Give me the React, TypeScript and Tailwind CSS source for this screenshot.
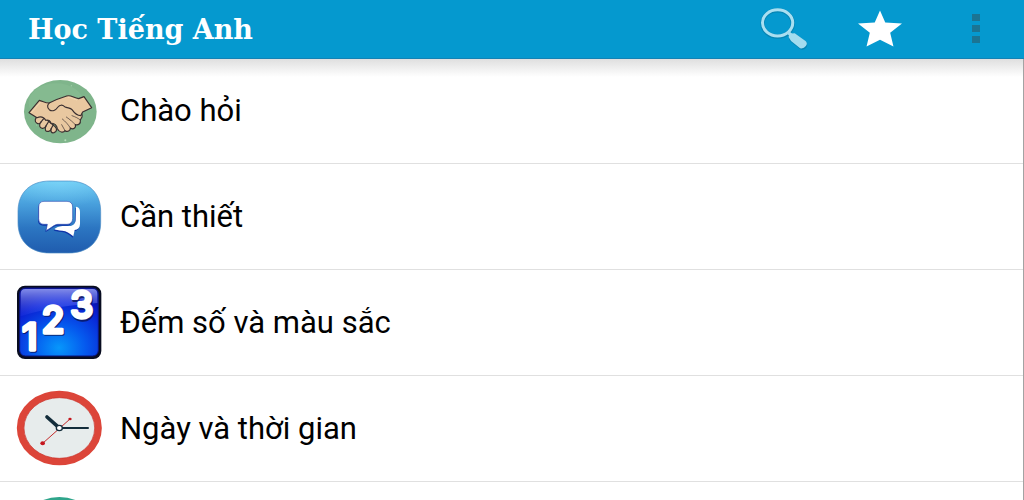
import type { ReactNode } from 'react'

type Topic = { id: string; label?: string; icon: ReactNode }

const iconCls = 'h-[74px] w-[84px] shrink-0 overflow-visible'

function HandshakeIcon(){
  return (
    <svg viewBox="21 12 252 222" className={iconCls} aria-hidden="true">
      <ellipse cx="151" cy="125" rx="109" ry="95" fill="#7fb58b" />
      <ellipse cx="138" cy="98" rx="82" ry="58" fill="#8bbf95" opacity=".5" />
      <g stroke="#3a2f30" strokeWidth="3.5" strokeLinejoin="round" strokeLinecap="round" fill="#e9c8a0">
        <path d="M84 140 C74 143 73 156 81 160 C86 163 91 160 93 156 C86 165 88 174 97 175 C103 176 106 172 108 168 C103 178 106 186 116 184 C121 183 123 179 124 176 C121 184 124 190 132 188 C141 185 142 177 135 170 L104 144 C98 138 90 138 84 140Z" />
        <path d="M92 157 L101 146 M107 169 L117 153 M123 177 L130 164" fill="none" />
        <path d="M88 91 L57 128 L81 143 C93 138 102 142 107 151 C115 148 121 153 123 160 C133 158 141 167 142 176 C148 187 160 190 165 182 C172 187 182 183 181 174 C190 180 199 173 196 164 C205 167 213 160 211 150 L216 141 C218 132 212 127 206 125 L168 104 C150 92 132 97 117 99 C106 99 97 93 88 91Z" />
        <path d="M119 98 C133 91 151 84 170 78 C183 74 191 84 206 86 L222 80 L245 113 L218 126 L212 137 C201 137 193 129 186 119 C181 112 173 115 164 110 C156 103 149 105 144 111 C137 121 127 126 118 119 C110 112 112 103 119 98Z" />
        <path d="M155 164 L165 182 M157 147 C166 154 176 165 181 174 M169 141 C181 149 190 158 196 164 M186 137 C197 141 205 145 211 150" fill="none" strokeWidth="2" />
      </g>
      <path d="M92 96 L64 128 M173 82 C181 80 187 87 201 90" fill="none" stroke="#f8dfbb" strokeWidth="2" />
      <circle cx="166" cy="211" r="3" fill="#b7dfba" />
      <circle cx="184" cy="47" r="1.5" fill="#b7dfba" />
      <circle cx="80" cy="165" r="2" fill="#99cca1" />
    </svg>
  )
}

function ChatIcon(){
  return (
    <svg viewBox="21 24 252 222" className={iconCls} aria-hidden="true">
      <defs>
        <linearGradient id="chatBg" x1="0" y1="0" x2="0" y2="1">
          <stop offset="0" stopColor="#6cc9f2" />
          <stop offset=".3" stopColor="#4aa2de" />
          <stop offset=".65" stopColor="#2c76c2" />
          <stop offset="1" stopColor="#1f5cae" />
        </linearGradient>
        <radialGradient id="chatGlow" cx=".5" cy="0" r=".65">
          <stop offset="0" stopColor="#8be1ff" stopOpacity=".4" />
          <stop offset="1" stopColor="#8be1ff" stopOpacity="0" />
        </radialGradient>
      </defs>
      <path d="M120 27 H176 C235 27 272 62 272 118 V152 C272 208 235 243 176 243 H120 C61 243 24 208 24 152 V118 C24 62 61 27 120 27Z" fill="url(#chatBg)" stroke="#4c8cc4" strokeWidth="2" />
      <path d="M120 29 H176 C235 29 270 62 270 118 V152 H26 V118 C26 62 61 29 120 29Z" fill="url(#chatGlow)" />
      <g transform="translate(-2 4)" fill="#0f35a8">
        <path d="M198 104 C208 106 210 112 210 120 V156 C210 167 204 173 194 174 L190 193 C179 184 169 177 157 176 C145 175 137 174 133 171 C139 167 146 163 157 162 H181 C190 160 197 153 197 143Z" />
        <path d="M102 88 H171 C182 88 188 95 188 105 V139 C188 151 181 157 171 157 H143 C132 158 122 169 108 176 L112 157 H102 C92 157 86 151 86 140 V105 C86 94 92 88 102 88Z" />
      </g>
      <g fill="#fff">
        <path d="M198 104 C208 106 210 112 210 120 V156 C210 167 204 173 194 174 L190 193 C179 184 169 177 157 176 C145 175 137 174 133 171 C139 167 146 163 157 162 H181 C190 160 197 153 197 143Z" />
        <path d="M102 88 H171 C182 88 188 95 188 105 V139 C188 151 181 157 171 157 H143 C132 158 122 169 108 176 L112 157 H102 C92 157 86 151 86 140 V105 C86 94 92 88 102 88Z" stroke="#2a4fb4" strokeWidth="2" />
      </g>
    </svg>
  )
}

function NumbersIcon(){
  return (
    <svg viewBox="21 24 252 222" className={iconCls} aria-hidden="true">
      <defs>
        <radialGradient id="numBg" cx=".5" cy=".88" r=".85">
          <stop offset="0" stopColor="#0797fb" />
          <stop offset=".4" stopColor="#0559ee" />
          <stop offset=".8" stopColor="#0a20d2" />
          <stop offset="1" stopColor="#0a10a8" />
        </radialGradient>
        <linearGradient id="numShine" x1="0" y1="0" x2="0" y2="1">
          <stop offset="0" stopColor="#a9b4ff" stopOpacity=".75" />
          <stop offset="1" stopColor="#4a60ff" stopOpacity=".1" />
        </linearGradient>
      </defs>
      <rect x="21" y="23" width="253" height="220" rx="24" fill="#080c20" />
      <rect x="29" y="30" width="236" height="204" rx="17" fill="url(#numBg)" stroke="#0b1680" strokeWidth="3" />
      <path d="M46 33 H248 Q262 33 262 48 V75 C190 82 115 87 32 115 V48 Q32 33 46 33Z" fill="url(#numShine)" />
      <g fontFamily="Inter, sans-serif" fontWeight="500" strokeLinejoin="round" strokeLinecap="round" strokeWidth="10">
        <g fill="#091459" stroke="#091459" opacity=".8">
          <text x="39" y="219" fontSize="112">1</text>
          <text x="98" y="169" fontSize="110">2</text>
          <text x="184" y="125" fontSize="110">3</text>
        </g>
        <g fill="#fff" stroke="#fff">
          <text x="36" y="215" fontSize="112">1</text>
          <text x="95" y="165" fontSize="110">2</text>
          <text x="181" y="121" fontSize="110">3</text>
        </g>
      </g>
    </svg>
  )
}

function ClockIcon(){
  return (
    <svg viewBox="21 24 252 222" className={iconCls} aria-hidden="true">
      <ellipse cx="148" cy="132" rx="117" ry="101" fill="#e7ecec" stroke="#dc4539" strokeWidth="21" />
      <ellipse cx="148" cy="132" rx="106" ry="91" fill="none" stroke="#c92c24" strokeWidth="2" />
      <path d="M98 178 L180 105" stroke="#c42b2b" strokeWidth="3" />
      <ellipse cx="98" cy="178" rx="7" ry="6" fill="#c5161d" />
      <ellipse cx="180" cy="105" rx="5" ry="4" fill="#c5161d" />
      <path d="M111 99 L146 130" stroke="#132d3b" strokeWidth="11" strokeLinecap="round" />
      <path d="M150 132 H234" stroke="#132d3b" strokeWidth="6" strokeLinecap="round" />
      <ellipse cx="148" cy="132" rx="9" ry="8" fill="#fff" stroke="#132d3b" strokeWidth="4" />
    </svg>
  )
}

function TealIcon(){
  return (
    <svg viewBox="21 24 252 222" className={iconCls} aria-hidden="true">
      <ellipse cx="148" cy="135" rx="126" ry="114" fill="#2fa58b" />
    </svg>
  )
}

const topics: Topic[] = [
  { id: 'greetings', label: 'Chào hỏi', icon: <HandshakeIcon /> },
  { id: 'essentials', label: 'Cần thiết', icon: <ChatIcon /> },
  { id: 'numbers', label: 'Đếm số và màu sắc', icon: <NumbersIcon /> },
  { id: 'time', label: 'Ngày và thời gian', icon: <ClockIcon /> },
  { id: 'next', icon: <TealIcon /> },
]

function TopBar(){
  return (
    <header className="flex h-[59px] shrink-0 items-center justify-between border-b border-[#1482b4] bg-[#0599cf] pl-7 text-white">
      <h1 className="pt-0.5 font-['DejaVu_Serif',serif] text-[27px] leading-8 font-bold">Học Tiếng Anh</h1>
      <div className="flex h-14 self-start">
        <button type="button" aria-label="Search" className="flex w-24 items-center justify-center">
          <svg viewBox="60 24 142 128" className="h-[43px] w-12" aria-hidden="true">
            <g transform="translate(0 2)" stroke="#08759e" opacity=".55" fill="none">
              <ellipse cx="112" cy="71" rx="45" ry="39" strokeWidth="13" />
              <path d="M143 99 L158 113" strokeWidth="13" />
              <path d="M160 115 L186 135" strokeWidth="28" strokeLinecap="round" />
            </g>
            <ellipse cx="112" cy="71" rx="45" ry="39" fill="none" stroke="#a9dff1" strokeWidth="9" />
            <path d="M143 99 L158 113" stroke="#a3dcef" strokeWidth="10" />
            <path d="M145 114 Q144 106 152 103 L163 102 L196 126 Q202 133 196 140 Q190 149 179 147 L152 125Z" fill="#a3dcef" />
          </svg>
        </button>
        <button type="button" aria-label="Favourites" className="flex w-24 items-center justify-center">
          <svg viewBox="353 30 134 112" className="h-[37px] w-11" aria-hidden="true">
            <path d="M420 31 L436 68 L487 71 L451 99 L461 141 L420 120 L379 141 L389 99 L353 71 L404 68Z" fill="#fff" />
          </svg>
        </button>
        <button type="button" aria-label="More options" className="flex w-24 flex-col items-center justify-center gap-1">
          <span className="h-[7px] w-2 bg-[#1b7493]" />
          <span className="h-[7px] w-2 bg-[#1b7493]" />
          <span className="h-[7px] w-2 bg-[#1b7493]" />
        </button>
      </div>
    </header>
  )
}

export default function App(){
  return (
    <div className="flex h-screen flex-col overflow-hidden bg-white">
      <TopBar />
      <main className="min-h-0 flex-1 overflow-hidden border-r border-[#a3a3a3] bg-linear-to-b from-[#dfdfdf] to-white bg-[length:100%_18px] bg-no-repeat">
        <ul>
          {topics.map(t => (
            <li key={t.id} className="h-[106px] border-b border-[#e0e0e0] first:h-[105px]">
              {t.label ? (
                <a href={`#${t.id}`} className="flex h-full items-center gap-[19px] pl-[17px] font-[Roboto,sans-serif] text-[31px] leading-9 text-black">
                  {t.icon}
                  <span>{t.label}</span>
                </a>
              ) : (
                <div className="flex h-full items-center pl-[17px]">{t.icon}</div>
              )}
            </li>
          ))}
        </ul>
      </main>
    </div>
  )
}
